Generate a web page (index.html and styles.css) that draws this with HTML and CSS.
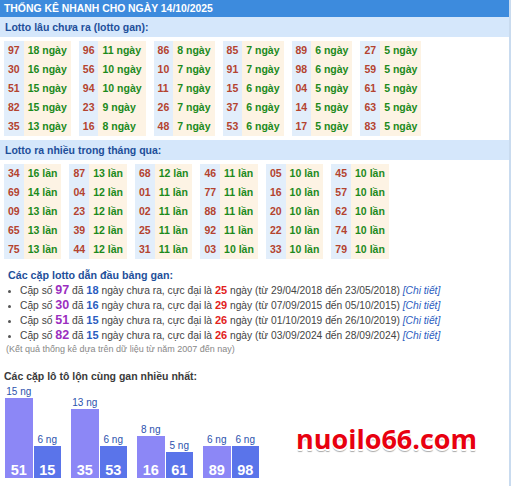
FILE: index.html
```html
<!DOCTYPE html>
<html lang="vi">
<head>
<meta charset="utf-8">
<title>Thống kê nhanh</title>
<link rel="stylesheet" href="styles.css">
</head>
<body>
<div class="wrap">
  <div class="head">THỐNG KÊ NHANH CHO NGÀY 14/10/2025</div>

  <div class="bar">Lotto lâu chưa ra (lotto gan):</div>
  <div class="groups">
    <div class="grp">
      <span class="n">97</span><span class="v">18 ngày</span>
      <span class="n">30</span><span class="v">16 ngày</span>
      <span class="n">51</span><span class="v">15 ngày</span>
      <span class="n">82</span><span class="v">15 ngày</span>
      <span class="n">35</span><span class="v">13 ngày</span>
    </div>
    <div class="grp">
      <span class="n">96</span><span class="v">11 ngày</span>
      <span class="n">56</span><span class="v">10 ngày</span>
      <span class="n">94</span><span class="v">10 ngày</span>
      <span class="n">23</span><span class="v">9 ngày</span>
      <span class="n">16</span><span class="v">8 ngày</span>
    </div>
    <div class="grp">
      <span class="n">86</span><span class="v">8 ngày</span>
      <span class="n">10</span><span class="v">7 ngày</span>
      <span class="n">11</span><span class="v">7 ngày</span>
      <span class="n">26</span><span class="v">7 ngày</span>
      <span class="n">48</span><span class="v">7 ngày</span>
    </div>
    <div class="grp">
      <span class="n">85</span><span class="v">7 ngày</span>
      <span class="n">91</span><span class="v">7 ngày</span>
      <span class="n">15</span><span class="v">6 ngày</span>
      <span class="n">37</span><span class="v">6 ngày</span>
      <span class="n">53</span><span class="v">6 ngày</span>
    </div>
    <div class="grp">
      <span class="n">89</span><span class="v">6 ngày</span>
      <span class="n">98</span><span class="v">6 ngày</span>
      <span class="n">04</span><span class="v">5 ngày</span>
      <span class="n">14</span><span class="v">5 ngày</span>
      <span class="n">17</span><span class="v">5 ngày</span>
    </div>
    <div class="grp">
      <span class="n">27</span><span class="v">5 ngày</span>
      <span class="n">59</span><span class="v">5 ngày</span>
      <span class="n">61</span><span class="v">5 ngày</span>
      <span class="n">63</span><span class="v">5 ngày</span>
      <span class="n">83</span><span class="v">5 ngày</span>
    </div>
  </div>

  <div class="bar">Lotto ra nhiều trong tháng qua:</div>
  <div class="groups">
    <div class="grp">
      <span class="n">34</span><span class="v">16 lần</span>
      <span class="n">69</span><span class="v">14 lần</span>
      <span class="n">09</span><span class="v">13 lần</span>
      <span class="n">65</span><span class="v">13 lần</span>
      <span class="n">75</span><span class="v">13 lần</span>
    </div>
    <div class="grp">
      <span class="n">87</span><span class="v">13 lần</span>
      <span class="n">04</span><span class="v">12 lần</span>
      <span class="n">23</span><span class="v">12 lần</span>
      <span class="n">39</span><span class="v">12 lần</span>
      <span class="n">44</span><span class="v">12 lần</span>
    </div>
    <div class="grp">
      <span class="n">68</span><span class="v">12 lần</span>
      <span class="n">01</span><span class="v">11 lần</span>
      <span class="n">02</span><span class="v">11 lần</span>
      <span class="n">25</span><span class="v">11 lần</span>
      <span class="n">31</span><span class="v">11 lần</span>
    </div>
    <div class="grp">
      <span class="n">46</span><span class="v">11 lần</span>
      <span class="n">77</span><span class="v">11 lần</span>
      <span class="n">88</span><span class="v">11 lần</span>
      <span class="n">92</span><span class="v">11 lần</span>
      <span class="n">03</span><span class="v">10 lần</span>
    </div>
    <div class="grp">
      <span class="n">05</span><span class="v">10 lần</span>
      <span class="n">16</span><span class="v">10 lần</span>
      <span class="n">20</span><span class="v">10 lần</span>
      <span class="n">22</span><span class="v">10 lần</span>
      <span class="n">33</span><span class="v">10 lần</span>
    </div>
    <div class="grp">
      <span class="n">45</span><span class="v">10 lần</span>
      <span class="n">57</span><span class="v">10 lần</span>
      <span class="n">62</span><span class="v">10 lần</span>
      <span class="n">74</span><span class="v">10 lần</span>
      <span class="n">79</span><span class="v">10 lần</span>
    </div>
  </div>

  <div class="pairs">
    <div class="pairs-title">Các cặp lotto dẫn đầu bảng gan:</div>
    <ul class="plist">
      <li>Cặp số <b class="pn">97</b> đã <b class="pd">18</b> ngày chưa ra, cực đại là <b class="pm">25</b> ngày (từ 29/04/2018 đến 23/05/2018) <a class="more">[Chi tiết]</a></li>
      <li>Cặp số <b class="pn">30</b> đã <b class="pd">16</b> ngày chưa ra, cực đại là <b class="pm">29</b> ngày (từ 07/09/2015 đến 05/10/2015) <a class="more">[Chi tiết]</a></li>
      <li>Cặp số <b class="pn">51</b> đã <b class="pd">15</b> ngày chưa ra, cực đại là <b class="pm">26</b> ngày (từ 01/10/2019 đến 26/10/2019) <a class="more">[Chi tiết]</a></li>
      <li>Cặp số <b class="pn">82</b> đã <b class="pd">15</b> ngày chưa ra, cực đại là <b class="pm">26</b> ngày (từ 03/09/2024 đến 28/09/2024) <a class="more">[Chi tiết]</a></li>
    </ul>
    <div class="note">(Kết quả thống kê dựa trên dữ liệu từ năm 2007 đến nay)</div>
  </div>

  <div class="lon-title">Các cặp lô tô lộn cùng gan nhiều nhất:</div>
  <div class="bottom">
    <div class="chart">
      <div class="pair">
        <div class="col"><span class="lbl">15 ng</span><div class="b b1" style="height:80px">51</div></div>
        <div class="col"><span class="lbl">6 ng</span><div class="b b2" style="height:32px">15</div></div>
      </div>
      <div class="pair">
        <div class="col"><span class="lbl">13 ng</span><div class="b b1" style="height:69px">35</div></div>
        <div class="col"><span class="lbl">6 ng</span><div class="b b2" style="height:32px">53</div></div>
      </div>
      <div class="pair">
        <div class="col"><span class="lbl">8 ng</span><div class="b b1" style="height:42px">16</div></div>
        <div class="col"><span class="lbl">5 ng</span><div class="b b2" style="height:26px">61</div></div>
      </div>
      <div class="pair">
        <div class="col"><span class="lbl">6 ng</span><div class="b b1" style="height:32px">89</div></div>
        <div class="col"><span class="lbl">6 ng</span><div class="b b2" style="height:32px">98</div></div>
      </div>
    </div>
    <div class="logo">nuoilo66.com</div>
  </div>
</div>
</body>
</html>
```

FILE: styles.css
```css
* { box-sizing: border-box; }
html, body { margin: 0; padding: 0; background: #fff; }
body {
  font-family: "Liberation Sans", Arial, sans-serif;
  font-size: 10.5px;
  color: #333;
}
.wrap {
  width: 511px;
  height: 486px;
  border-right: 2px solid #c9dbef;
  overflow: hidden;
}
.head {
  height: 17px;
  line-height: 17px;
  background: #3d8bdd;
  color: #fff;
  font-weight: bold;
  font-size: 10.4px;
  padding-left: 4px;
}
.bar {
  height: 20px;
  line-height: 20px;
  background: #d5e7fb;
  color: #1e4f9a;
  font-weight: bold;
  font-size: 10.5px;
  padding-left: 5px;
}
.groups {
  display: flex;
  gap: 8px;
  padding: 4px 4px;
}
.grp {
  display: grid;
  grid-template-columns: auto auto;
  grid-auto-rows: 19px;
  font-weight: bold;
  font-size: 10.5px;
}
.grp span { line-height: 19px; padding: 0 4px; white-space: nowrap; }
.grp .n { background: #e2eefb; color: #b4432f; }
.grp .v { background: #fdf3e4; color: #1c8a1c; }

.pairs { padding: 5px 0 0 8px; }
.pairs-title {
  color: #1e4f9a;
  font-weight: bold;
  font-size: 10.7px;
  line-height: 14px;
}
.plist {
  list-style: none;
  margin: 1px 0 0;
  padding: 0;
  font-size: 10.25px;
  color: #444;
}
.plist li { line-height: 15px; white-space: nowrap; position: relative; padding-left: 12px; }
.plist li::before {
  content: "";
  position: absolute;
  left: 0;
  top: 7px;
  width: 3px;
  height: 3px;
  border-radius: 50%;
  background: #555;
}
.pn { color: #9b2fc0; font-size: 12.5px; }
.pd { color: #2a5cc0; font-size: 11px; }
.pm { color: #e2211c; font-size: 11px; }
.more { color: #2a5cc0; font-style: italic; }
.note {
  margin-left: -2px;
  font-size: 9px;
  line-height: 13px;
  color: #888;
}

.lon-title {
  margin-top: 13px;
  padding-left: 4px;
  font-weight: bold;
  font-size: 10.5px;
  line-height: 14px;
  color: #3a3a3a;
}
.bottom {
  display: flex;
  align-items: flex-end;
  height: 95px;
}
.chart {
  display: flex;
  align-items: flex-end;
  gap: 10px;
  padding-left: 5px;
  height: 95px;
}
.pair { display: flex; align-items: flex-end; gap: 1px; }
.col { display: flex; flex-direction: column; align-items: center; width: 27.5px; }
.lbl {
  font-size: 10px;
  line-height: 12px;
  color: #2c52ad;
  white-space: nowrap;
}
.b {
  width: 100%;
  display: flex;
  align-items: flex-end;
  justify-content: center;
  color: #fff;
  font-weight: bold;
  font-size: 14.5px;
  line-height: 16px;
}
.b1 { background: #8c87f6; }
.b2 { background: #5a74ea; }
.logo {
  margin-left: 37px;
  margin-bottom: 24px;
  font-family: "Open Sans", "DejaVu Sans", sans-serif;
  font-weight: 700;
  font-size: 27px;
  line-height: 30px;
  color: #e8000f;
  letter-spacing: 0;
  text-shadow:
    1px 0 0 #fff, -1px 0 0 #fff, 0 1px 0 #fff, 0 -1px 0 #fff,
    1px 1px 0 #fff, -1px 1px 0 #fff, 0 2px 0 #fff,
    0 3px 1px #a9a9a9;
}
```
